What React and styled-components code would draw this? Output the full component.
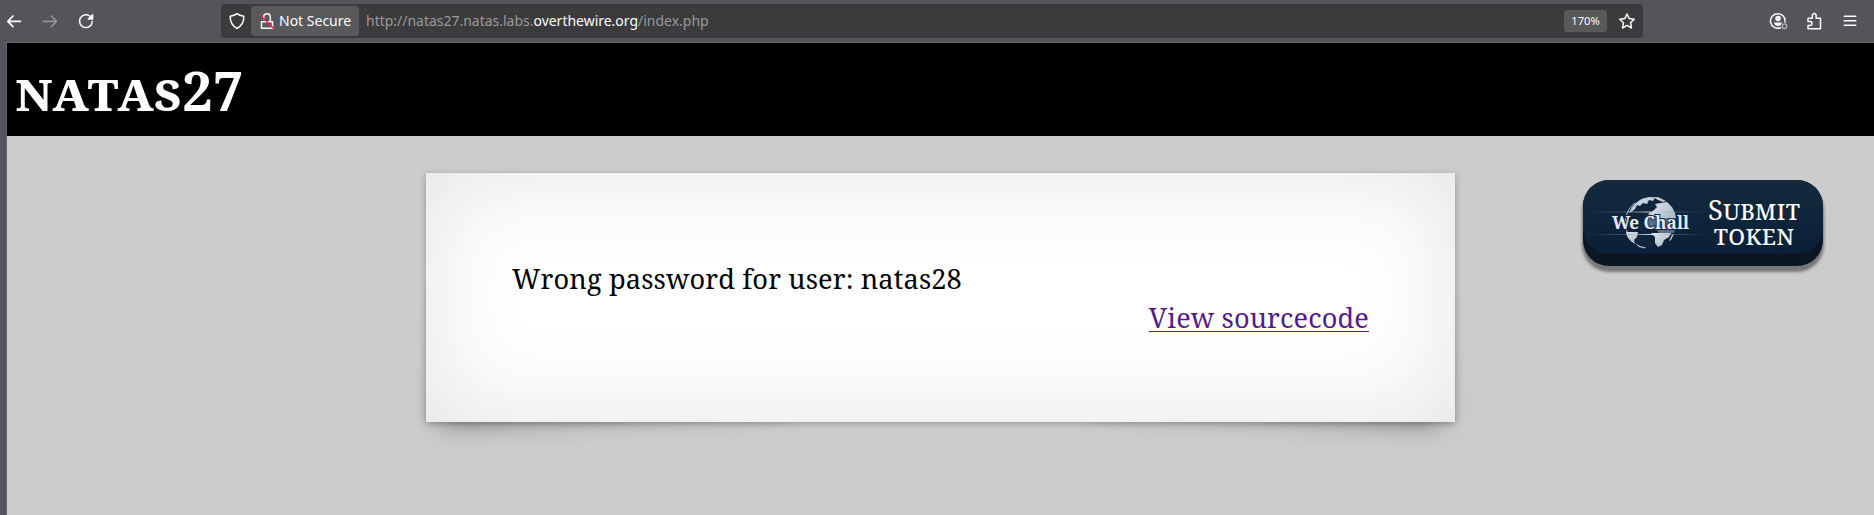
import React from "react";
import styled, { createGlobalStyle } from "styled-components";

const Global = createGlobalStyle`
  *, *::before, *::after { box-sizing: border-box; }
  html, body { margin: 0; padding: 0; background: #cccccc; }
`;

const SANS = `"Noto Sans", "Open Sans", sans-serif`;
const SERIF = `"Noto Serif", "Droid Serif", "DejaVu Serif Condensed", serif`;

const Window = styled.div`
  height: 515px;
  width: 100%;
  display: flex;
  flex-direction: column;
  overflow: hidden;
  background: #55545a;
`;

const Toolbar = styled.header`
  height: 42px;
  flex: none;
  display: flex;
  align-items: center;
  font-family: ${SANS};
`;

const NavGroup = styled.div`
  display: flex;
  align-items: center;
  gap: 16px;
  width: 221px;
  padding-left: 4px;
`;

const Icon = styled.svg`
  width: 20px;
  height: 20px;
  flex: none;
  display: block;
  fill: none;
  stroke: ${(p) => p.$color || "#fbfbfe"};
  stroke-width: ${(p) => p.$weight || 1.5};
  stroke-linecap: round;
  stroke-linejoin: round;
`;

const UrlBar = styled.div`
  width: 1422px;
  height: 34px;
  display: flex;
  align-items: center;
  border-radius: 4px;
  background: #3b3a3c;
  padding: 0 6px;
`;

const SecurityChip = styled.div`
  width: 108px;
  height: 30px;
  margin-left: 4px;
  padding-left: 6px;
  display: flex;
  align-items: center;
  gap: 2px;
  border-radius: 4px;
  background: #59585a;
  color: #fbfbfe;
  font-size: 14px;
  line-height: 30px;
  white-space: nowrap;
`;

const Address = styled.div`
  flex: 1;
  margin-left: 7px;
  color: #9a999b;
  font-size: 13.97px;
  line-height: 34px;
  white-space: nowrap;
`;

const Domain = styled.span`
  color: #fbfbfe;
`;

const ZoomBadge = styled.div`
  width: 43px;
  height: 22px;
  margin-right: 10px;
  border-radius: 3px;
  background: #59585a;
  color: #fbfbfe;
  font-size: 11.2px;
  line-height: 22px;
  text-align: center;
`;

const ActionGroup = styled.div`
  flex: 1;
  display: flex;
  align-items: center;
  justify-content: flex-end;
  gap: 16px;
  padding-right: 14px;
`;

const Viewport = styled.main`
  flex: 1;
  margin-left: 6px;
  border-top: 1px solid #66666a;
  border-left: 1px solid #66666a;
  background: #cccccc;
  font-family: ${SERIF};
  display: flex;
  flex-direction: column;
`;

const Banner = styled.div`
  height: 93px;
  flex: none;
  background: #000;
  padding: 0 8.5px;
`;

const Title = styled.h1`
  margin: 0;
  color: #fff;
  font-size: 54.4px;
  line-height: 94px;
  font-weight: 700;
  font-variant: small-caps;
  letter-spacing: 0.2px;
`;

const Stage = styled.div`
  flex: 1;
  display: flex;
  align-items: flex-start;
  padding: 37px 0 0 419px;
  position: relative;
  z-index: 0;
`;

const Card = styled.section`
  position: relative;
  width: 1029px;
  height: 249px;
  padding: 86px 86px 0;
  background: #fff;
  box-shadow: 0 1.7px 6.8px rgba(0, 0, 0, 0.3), 0 0 102px rgba(0, 0, 0, 0.11) inset;
  font-size: 27.2px;
  line-height: 39px;
  letter-spacing: 0.12px;

  &::before,
  &::after {
    content: "";
    position: absolute;
    z-index: -2;
    bottom: 22px;
    left: 22px;
    width: 340px;
    height: 137px;
    box-shadow: 0 13.6px 27.2px rgba(0, 0, 0, 0.46);
    transform: skew(-8deg) rotate(-3deg);
  }
  &::after {
    left: auto;
    right: 22px;
    transform: skew(8deg) rotate(3deg);
  }
`;

const Message = styled.p`
  margin: 0;
  color: #000;
  white-space: nowrap;
`;

const SourceRow = styled.div`
  display: flex;
  justify-content: flex-end;
`;

const SourceLink = styled.a`
  color: #551a8b;
  text-decoration: underline;
  text-decoration-thickness: 1px;
  text-underline-offset: 3px;
  text-decoration-skip-ink: none;
  white-space: nowrap;
`;

const TokenButton = styled.div`
  width: 240px;
  height: 86px;
  margin: 7px 0 0 128px;
  padding-bottom: 12px;
  border-radius: 26px;
  background: #0a1621;
  box-shadow: 0 5px 3px 1px #777;
`;

const TokenFace = styled.div`
  height: 74px;
  display: flex;
  align-items: flex-start;
  border-radius: 26px;
  overflow: hidden;
  background: linear-gradient(#132a3e, #0b2038);
`;

const Logo = styled.svg`
  width: 122px;
  height: 54px;
  flex: none;
  margin-top: 16px;
  font-family: ${SERIF};
`;

const TokenLabel = styled.div`
  width: 98px;
  color: #fff;
  text-align: center;
  font-size: 27.4px;
  line-height: 25.2px;
  font-variant: small-caps;
  padding-top: 17px;
`;

const LAND = [
  "M47 15C50 9 55 4.500 60 2.500L66 1L72 1.500L70 5L66 4L64 8L60 7L57 10L54 9L52 13L48 16L45 17Z",
  "M70 1L76 1.500L83 5L80 6L75 4Z",
  "M70 15L74 11L72 8L78 7L84 6L89 11L92 17L93 22H66L66 18Z",
  "M43 36H55L54 41L51 44L52 48C47 45 43.500 41 43 36Z",
  "M68 37H88L86 41L81 44L79 49L75 51L72 47L72 41Z",
  "M89 39L91 38L88 44L86 45Z",
  "M52 47L57 50L63 51.500L62 52.500L56 51Z",
];

export default function App() {
  return (
    <Window>
      <Global />
      <Toolbar>
        <NavGroup>
          <Icon viewBox="0 0 20 20" $weight={1.7}><path d="M16.500 10.300H3.800M9 5L3.800 10.300L9 15.600" /></Icon>
          <Icon viewBox="0 0 20 20" $color="#929195" $weight={1.7}><path d="M3.500 10.300H16.500M11.300 5L16.500 10.300L11.300 15.600" /></Icon>
          <Icon viewBox="0 0 20 20">
            <path d="M16.300 10.500A6.400 6.400 0 1 1 13.700 5" />
            <path d="M16.600 3.800V8H12.300Z" fill="#fbfbfe" />
          </Icon>
        </NavGroup>
        <UrlBar>
          <Icon viewBox="0 0 20 20"><path d="M10 2.700C12 4.300 14 4.900 16.800 5.300C17 11 14.500 15 10 17.500C5.500 15 3 11 3.200 5.300C6 4.900 8 4.300 10 2.700Z" /></Icon>
          <SecurityChip>
            <Icon viewBox="0 0 20 20">
              <path d="M6.700 8V6a3.300 3.300 0 0 1 6.600 0V10.500M4.500 10.800H15.500V17.300H4.500Z" />
              <path stroke="#e22850" d="M3.500 4.500L17 17.800" />
            </Icon>
            <span>Not Secure</span>
          </SecurityChip>
          <Address>http://natas27.natas.labs.<Domain>overthewire.org</Domain>/index.php</Address>
          <ZoomBadge>170%</ZoomBadge>
          <Icon viewBox="0 0 20 20"><path d="M10 3L12.200 7.600L17.300 8.200L13.500 11.700L14.500 17L10 14.400L5.500 17L6.500 11.700L2.700 8.200L7.800 7.600Z" /></Icon>
        </UrlBar>
        <ActionGroup>
          <Icon viewBox="0 0 20 20">
            <path d="M12.500 16.700A7.300 7.300 0 1 1 17 11" />
            <circle cx="10" cy="7.500" r="2" fill="#fbfbfe" />
            <path d="M6 11.500H14C13.500 14 12 15 10 15S6.500 14 6 11.500Z" fill="#fbfbfe" stroke="none" />
            <circle cx="16.500" cy="15.200" r="2.300" stroke="#b5b5b8" strokeWidth="1.300" />
          </Icon>
          <Icon viewBox="0 0 20 20"><path d="M4 7.200H8.300V4.500A1.900 1.900 0 0 1 12.100 4.500V7.200H16.500V17.800H4V14.500H6A2 2 0 0 0 6 10.500H4Z" /></Icon>
          <Icon viewBox="0 0 20 20" $weight={1.6}><path d="M4.300 5.300H15.700M4.300 9.800H15.700M4.300 14.300H15.700" /></Icon>
        </ActionGroup>
      </Toolbar>
      <Viewport>
        <Banner><Title>natas27</Title></Banner>
        <Stage>
          <Card>
            <Message>Wrong password for user: natas28</Message>
            <SourceRow><SourceLink>View sourcecode</SourceLink></SourceRow>
          </Card>
          <TokenButton>
            <TokenFace>
              <Logo viewBox="0 0 122 54">
                <defs>
                  <linearGradient id="beam" x1="0" x2="1" y1="0" y2="0">
                    <stop offset="0" stopColor="#6f8ba6" stopOpacity="0" />
                    <stop offset="0.300" stopColor="#6f8ba6" stopOpacity="0.450" />
                    <stop offset="0.550" stopColor="#eef4fa" stopOpacity="0.900" />
                    <stop offset="0.750" stopColor="#6f8ba6" stopOpacity="0.450" />
                    <stop offset="1" stopColor="#6f8ba6" stopOpacity="0" />
                  </linearGradient>
                  <linearGradient id="land" x1="0" x2="1" y1="0" y2="1">
                    <stop offset="0" stopColor="#dce3ec" />
                    <stop offset="1" stopColor="#aab8c8" />
                  </linearGradient>
                </defs>
                <circle cx="67.500" cy="26.500" r="25" fill="#10243a" />
                <path d="M45 38A25 25 0 0 1 52 7" fill="none" stroke="#b9c6d4" strokeWidth="1" />
                <path d="M66 16H91C93.500 24 93.500 30 91 37H76L73 33L65 32L62 25Z" fill="#5b7088" />
                {LAND.map((d) => <path key={d} d={d} fill="url(#land)" />)}
                <rect x="4" y="15.500" width="118" height="1" fill="url(#beam)" />
                <rect x="4" y="38" width="118" height="1" fill="url(#beam)" />
                <text x="29" y="32.500" textLength="77" lengthAdjust="spacingAndGlyphs" fontSize="18.500" fontWeight="700" fill="#e4ebf2" stroke="#10243a" strokeWidth="2" paintOrder="stroke">We Chall</text>
              </Logo>
              <TokenLabel>Submit token</TokenLabel>
            </TokenFace>
          </TokenButton>
        </Stage>
      </Viewport>
    </Window>
  );
}
